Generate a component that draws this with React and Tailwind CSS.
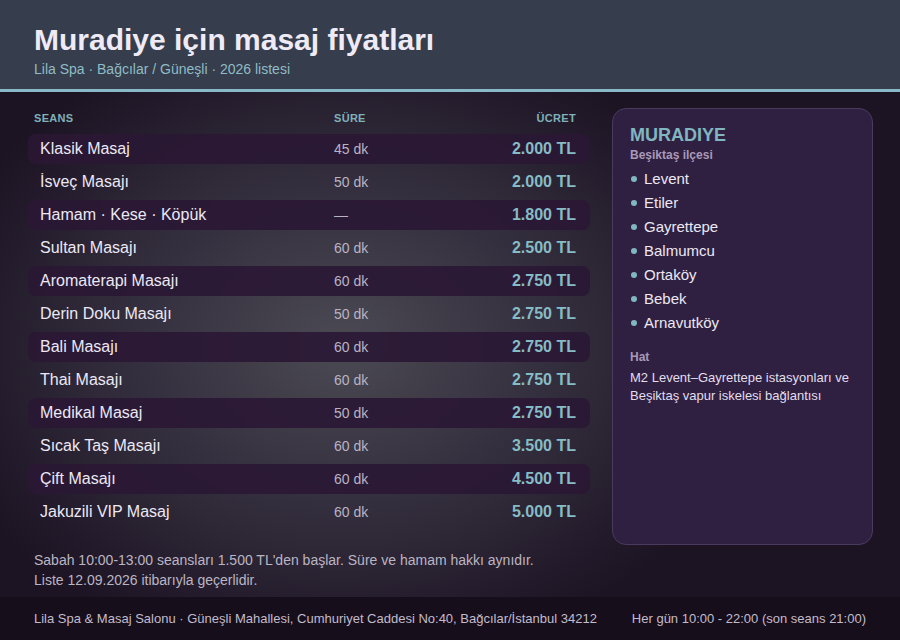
const services = [
  { name: 'Klasik Masaj', time: '45 dk', price: '2.000 TL' },
  { name: 'İsveç Masajı', time: '50 dk', price: '2.000 TL' },
  { name: 'Hamam · Kese · Köpük', time: '—', price: '1.800 TL' },
  { name: 'Sultan Masajı', time: '60 dk', price: '2.500 TL' },
  { name: 'Aromaterapi Masajı', time: '60 dk', price: '2.750 TL' },
  { name: 'Derin Doku Masajı', time: '50 dk', price: '2.750 TL' },
  { name: 'Bali Masajı', time: '60 dk', price: '2.750 TL' },
  { name: 'Thai Masajı', time: '60 dk', price: '2.750 TL' },
  { name: 'Medikal Masaj', time: '50 dk', price: '2.750 TL' },
  { name: 'Sıcak Taş Masajı', time: '60 dk', price: '3.500 TL' },
  { name: 'Çift Masajı', time: '60 dk', price: '4.500 TL' },
  { name: 'Jakuzili VIP Masaj', time: '60 dk', price: '5.000 TL' },
];

const areas = ['Levent', 'Etiler', 'Gayrettepe', 'Balmumcu', 'Ortaköy', 'Bebek', 'Arnavutköy'];

export default function App() {
  return (
    <div className="w-[900px] h-[640px] flex flex-col overflow-hidden bg-[#1a1120] font-['Liberation_Sans',Arial,sans-serif]">
      {/* Header */}
      <header className="h-[92px] shrink-0 bg-[#363d4c] border-b-[3px] border-[#87b9c9] px-[34px] pt-[21px]">
        <h1 className="text-[30px] leading-[37px] font-bold text-[#efebf6]">Muradiye için masaj fiyatları</h1>
        <p className="text-[14px] leading-[18px] text-[#8fbcc6] mt-[2px]">Lila Spa · Bağcılar / Güneşli · 2026 listesi</p>
      </header>

      {/* Main */}
      <main className="flex-1 flex flex-col pt-[16px] bg-[radial-gradient(ellipse_55%_75%_at_38%_50%,#4b4a53_0%,#35303f_40%,#1c1323_85%)]">
        <div className="flex gap-[22px] pl-[28px] pr-[27px]">
          {/* Price table */}
          <div className="w-[562px] pb-[18px]">
            <div className="grid grid-cols-[300px_1fr_auto] pl-[6px] pr-[14px] h-[20px] items-center text-[11px] font-bold tracking-[0.3px] text-[#7fb1ba]">
              <span>SEANS</span>
              <span>SÜRE</span>
              <span className="text-right">ÜCRET</span>
            </div>
            <div className="mt-[6px] flex flex-col gap-[3px]">
              {services.map((s, i) => (
                <div
                  key={s.name}
                  className={`grid grid-cols-[294px_1fr_auto] items-center h-[30px] pl-[12px] pr-[14px] rounded-[8px] ${i % 2 === 0 ? 'bg-[#2a1734]/90' : ''}`}
                >
                  <span className="text-[16px] text-[#ece8f4]">{s.name}</span>
                  <span className="text-[14px] text-[#b9b3c4]">{s.time}</span>
                  <span className="text-[16px] font-bold text-[#86bcc5] text-right">{s.price}</span>
                </div>
              ))}
            </div>
          </div>

          {/* Side card */}
          <aside className="w-[261px] rounded-[14px] bg-[#2f2041] border border-[#4a3b5e] px-[17px] pt-[15px]">
            <h2 className="text-[18px] leading-[22px] font-bold text-[#7fb6c0]">MURADIYE</h2>
            <p className="text-[12px] leading-[16px] font-bold text-[#a999b8] mt-[1px]">Beşiktaş ilçesi</p>
            <ul className="mt-[4px]">
              {areas.map((a) => (
                <li key={a} className="flex items-center gap-[7px] h-[24px] text-[15px] text-[#ece8f4]">
                  <span className="w-[6px] h-[6px] rounded-full bg-[#7fb6c0] ml-[1px]" />
                  {a}
                </li>
              ))}
            </ul>
            <p className="mt-[14px] text-[12px] leading-[16px] font-bold text-[#a999b8]">Hat</p>
            <p className="mt-[4px] text-[13px] leading-[18px] text-[#e2deec]">
              M2 Levent–Gayrettepe istasyonları ve Beşiktaş vapur iskelesi bağlantısı
            </p>
          </aside>
        </div>

        {/* Notes */}
        <div className="px-[34px] pt-[5px] text-[14px] leading-[20px] text-[#bbb5c3]">
          <p>Sabah 10:00-13:00 seansları 1.500 TL'den başlar. Süre ve hamam hakkı aynıdır.</p>
          <p>Liste 12.09.2026 itibarıyla geçerlidir.</p>
        </div>
      </main>

      {/* Footer */}
      <footer className="h-[43px] shrink-0 bg-[#170e1c] flex items-center justify-between pl-[34px] pr-[34px] text-[13px] text-[#c2bccb]">
        <span>Lila Spa &amp; Masaj Salonu · Güneşli Mahallesi, Cumhuriyet Caddesi No:40, Bağcılar/İstanbul 34212</span>
        <span>Her gün 10:00 - 22:00 (son seans 21:00)</span>
      </footer>
    </div>
  );
}
